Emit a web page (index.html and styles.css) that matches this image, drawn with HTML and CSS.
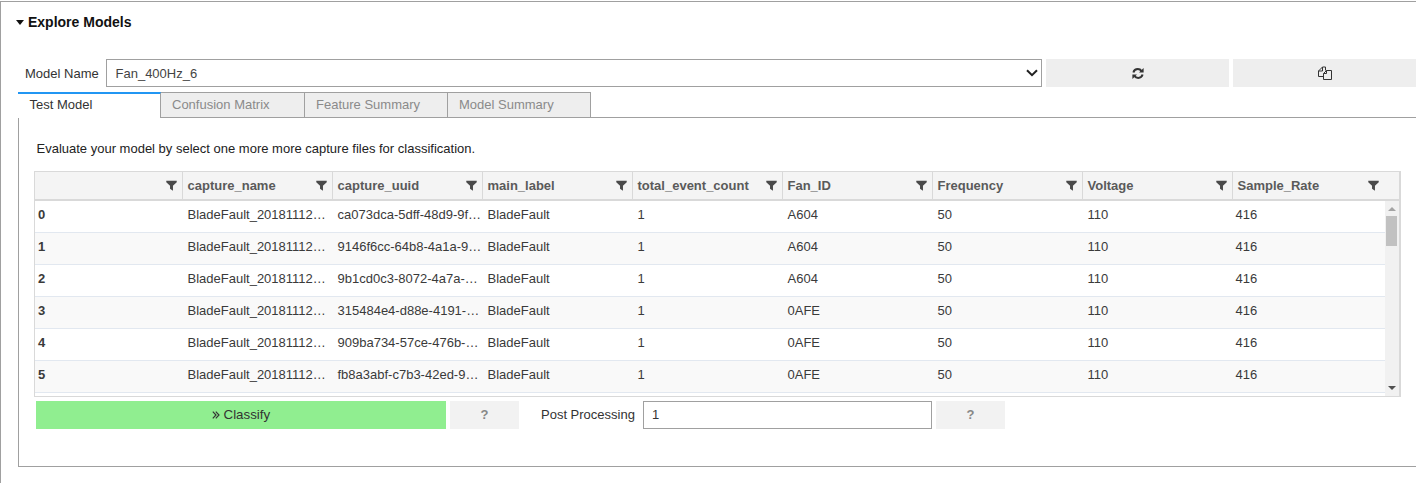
FILE: index.html
```html
<!DOCTYPE html>
<html lang="en">
<head>
    <meta charset="UTF-8" />
    <title>Explore Models</title>
    <link rel="stylesheet" href="styles.css">
</head>
<body>
    <svg width="0" height="0" class="defs">
        <symbol id="filter" viewBox="0 0 12 12">
            <path d="M0.3 0.8h11.4v1.6L7.6 6.4V11.6L4.4 9.6V6.4L0.3 2.4z" fill="#4a4a4a"/>
        </symbol>
    </svg>
    <section class="panel">
        <h2 class="panel-title"><span class="caret"></span>Explore Models</h2>

        <div class="model-row">
            <label class="model-label" for="model">Model Name</label>
            <div class="select-wrap">
                <select id="model" class="model-select">
                    <option>Fan_400Hz_6</option>
                </select>
                <svg class="chevron" width="12" height="8" viewBox="0 0 12 8" fill="none" stroke="#222" stroke-width="2">
                    <path d="M1 1.2L6 6.2L11 1.2"/>
                </svg>
            </div>
            <button class="icon-btn" type="button" aria-label="Refresh">
                <svg width="12" height="13" viewBox="0 0 12 13" fill="none" stroke="#333" stroke-width="2">
                    <path d="M1.4 5.4C2 3.2 3.8 2.1 5.8 2.1c1.5 0 2.9.7 3.8 2"/>
                    <path d="M10.6 7.6c-.6 2.2-2.4 3.3-4.4 3.3-1.5 0-2.9-.7-3.8-2"/>
                    <path d="M11.6 .9v4.6H7z" fill="#333" stroke="none"/>
                    <path d="M.4 12.1V7.5H5z" fill="#333" stroke="none"/>
                </svg>
            </button>
            <button class="icon-btn" type="button" aria-label="Copy">
                <svg width="14" height="14" viewBox="0 0 14 14" fill="none" stroke="#333" stroke-width="1">
                    <path d="M5.5 10.5H.5V5L4.5 1H7.5V4.5"/>
                    <path d="M4.5 1V5H.5"/>
                    <path d="M5.5 7.5L8.5 4.5H13.5V13.5H5.5z" fill="#eee"/>
                    <path d="M8.5 4.5V7.5H5.5"/>
                </svg>
            </button>
        </div>

        <div class="tabs">
            <div class="tab tab-active">Test Model</div>
            <div class="tab tab-wide">Confusion Matrix</div>
            <div class="tab">Feature Summary</div>
            <div class="tab">Model Summary</div>
        </div>

        <div class="tab-body">
            <p class="intro">Evaluate your model by select one more more capture files for classification.</p>

            <div class="grid">
                <div class="grid-head">
                    <div class="hcell"><span></span><svg class="funnel"><use href="#filter"/></svg></div>
                    <div class="hcell"><span>capture_name</span><svg class="funnel"><use href="#filter"/></svg></div>
                    <div class="hcell"><span>capture_uuid</span><svg class="funnel"><use href="#filter"/></svg></div>
                    <div class="hcell"><span>main_label</span><svg class="funnel"><use href="#filter"/></svg></div>
                    <div class="hcell"><span>total_event_count</span><svg class="funnel"><use href="#filter"/></svg></div>
                    <div class="hcell"><span>Fan_ID</span><svg class="funnel"><use href="#filter"/></svg></div>
                    <div class="hcell"><span>Frequency</span><svg class="funnel"><use href="#filter"/></svg></div>
                    <div class="hcell"><span>Voltage</span><svg class="funnel"><use href="#filter"/></svg></div>
                    <div class="hcell hcell-last"><span>Sample_Rate</span><svg class="funnel"><use href="#filter"/></svg></div>
                </div>
                <div class="grid-body">
                    <div class="row">
                        <div class="cell cell-index">0</div>
                        <div class="cell">BladeFault_20181112…</div>
                        <div class="cell">ca073dca-5dff-48d9-9f…</div>
                        <div class="cell">BladeFault</div>
                        <div class="cell">1</div>
                        <div class="cell">A604</div>
                        <div class="cell">50</div>
                        <div class="cell">110</div>
                        <div class="cell cell-last">416</div>
                    </div>
                    <div class="row">
                        <div class="cell cell-index">1</div>
                        <div class="cell">BladeFault_20181112…</div>
                        <div class="cell">9146f6cc-64b8-4a1a-9…</div>
                        <div class="cell">BladeFault</div>
                        <div class="cell">1</div>
                        <div class="cell">A604</div>
                        <div class="cell">50</div>
                        <div class="cell">110</div>
                        <div class="cell cell-last">416</div>
                    </div>
                    <div class="row">
                        <div class="cell cell-index">2</div>
                        <div class="cell">BladeFault_20181112…</div>
                        <div class="cell">9b1cd0c3-8072-4a7a-…</div>
                        <div class="cell">BladeFault</div>
                        <div class="cell">1</div>
                        <div class="cell">A604</div>
                        <div class="cell">50</div>
                        <div class="cell">110</div>
                        <div class="cell cell-last">416</div>
                    </div>
                    <div class="row">
                        <div class="cell cell-index">3</div>
                        <div class="cell">BladeFault_20181112…</div>
                        <div class="cell">315484e4-d88e-4191-…</div>
                        <div class="cell">BladeFault</div>
                        <div class="cell">1</div>
                        <div class="cell">0AFE</div>
                        <div class="cell">50</div>
                        <div class="cell">110</div>
                        <div class="cell cell-last">416</div>
                    </div>
                    <div class="row">
                        <div class="cell cell-index">4</div>
                        <div class="cell">BladeFault_20181112…</div>
                        <div class="cell">909ba734-57ce-476b-…</div>
                        <div class="cell">BladeFault</div>
                        <div class="cell">1</div>
                        <div class="cell">0AFE</div>
                        <div class="cell">50</div>
                        <div class="cell">110</div>
                        <div class="cell cell-last">416</div>
                    </div>
                    <div class="row">
                        <div class="cell cell-index">5</div>
                        <div class="cell">BladeFault_20181112…</div>
                        <div class="cell">fb8a3abf-c7b3-42ed-9…</div>
                        <div class="cell">BladeFault</div>
                        <div class="cell">1</div>
                        <div class="cell">0AFE</div>
                        <div class="cell">50</div>
                        <div class="cell">110</div>
                        <div class="cell cell-last">416</div>
                    </div>
                    <div class="scrollbar">
                        <span class="arrow arrow-up"></span>
                        <span class="thumb"></span>
                        <span class="arrow arrow-down"></span>
                    </div>
                </div>
            </div>

            <div class="actions">
                <button class="classify" type="button">
                    <svg width="8" height="8" viewBox="0 0 8 8" fill="none" stroke="#333" stroke-width="1.2">
                        <path d="M.8 .6L4 4L.8 7.4"/>
                        <path d="M3.8 .6L7 4L3.8 7.4"/>
                    </svg>
                    Classify
                </button>
                <button class="help" type="button">?</button>
                <label class="post-label" for="post">Post Processing</label>
                <input id="post" class="post-input" type="text" value="1" />
                <button class="help" type="button">?</button>
            </div>
        </div>
    </section>
</body>
</html>
```

FILE: styles.css
```css
* {
    box-sizing: border-box;
}
body {
    margin: 0;
    height: 483px;
    overflow: hidden;
    background: #fff;
    font-family: "Liberation Sans", Arial, sans-serif;
    font-size: 13px;
    color: #333;
}
button {
    font-family: inherit;
}
.defs {
    position: absolute;
}
.panel {
    height: 483px;
    margin-top: 1px;
    padding: 0 0 0 17px;
    border-top: 1px solid #a0a0a0;
    border-left: 1px solid #a0a0a0;
}
.panel-title {
    display: flex;
    align-items: center;
    height: 16px;
    margin: 12px 0 0 -2px;
    font-size: 14px;
    font-weight: bold;
    color: #111;
}
.caret {
    width: 0;
    height: 0;
    margin: 1px 4px 0 0;
    border-left: 4px solid transparent;
    border-right: 4px solid transparent;
    border-top: 5px solid #111;
}
.model-row {
    display: flex;
    align-items: center;
    height: 28px;
    margin-top: 29px;
    padding-left: 7px;
}
.model-label {
    width: 81px;
    color: #333;
}
.select-wrap {
    position: relative;
    width: 936px;
    height: 28px;
}
.model-select {
    width: 100%;
    height: 28px;
    padding-left: 8.5px;
    border: 1px solid #a0a0a0;
    border-radius: 0;
    background: #fff;
    font-family: inherit;
    font-size: 13px;
    color: #444;
    appearance: none;
}
.chevron {
    position: absolute;
    top: 10px;
    right: 4px;
}
.icon-btn {
    display: flex;
    align-items: center;
    justify-content: center;
    width: 183px;
    height: 28px;
    margin-left: 4px;
    border: none;
    background: #eee;
}
.tabs {
    display: flex;
    height: 26px;
    margin-top: 5px;
}
.tab {
    width: 143px;
    padding: 4px 0 0 11px;
    border-top: 1px solid #a0a0a0;
    border-right: 1px solid #a0a0a0;
    border-bottom: 1px solid #a0a0a0;
    background: #eee;
    color: #8a8a8a;
}
.tab-wide {
    width: 144px;
}
.tab-active {
    position: relative;
    z-index: 1;
    padding: 3px 0 0 11.5px;
    border-top: 2px solid #2196f3;
    border-bottom: none;
    background: #fff;
    color: #333;
}
.tab-body {
    height: 350px;
    margin-top: -1px;
    padding: 23px 0 0 15px;
    border-top: 1px solid #a0a0a0;
    border-left: 1px solid #a0a0a0;
    border-bottom: 1px solid #a0a0a0;
}
.intro {
    height: 15px;
    margin: 0 0 15px 2.5px;
    color: #222;
}
.grid {
    width: 1367px;
    height: 226px;
    border: 1px solid #d9d9d9;
    border-width: 1px 2px 1px 1px;
}
.grid-head {
    display: grid;
    grid-template-columns: 147.5px repeat(7, 150px) 1fr;
    height: 29px;
    background: #f4f4f4;
    border-bottom: 2px solid #d9d9d9;
}
.hcell {
    display: flex;
    align-items: center;
    justify-content: space-between;
    padding: 0 5px;
    border-right: 1px solid #d9d9d9;
    font-weight: bold;
    color: #5a5a5a;
}
.hcell-last {
    padding-right: 20px;
    border-right: none;
}
.funnel {
    width: 11px;
    height: 11px;
}
.grid-body {
    position: relative;
    height: 195px;
    padding-right: 14px;
    overflow: hidden;
}
.row {
    display: grid;
    grid-template-columns: 147.5px repeat(7, 150px) 1fr;
    height: 32px;
    padding-bottom: 4px;
    align-items: center;
    border-bottom: 1px solid #e2e8f0;
}
.row:nth-child(even) {
    background: #f9f9f9;
}
.cell {
    padding-left: 5px;
    white-space: nowrap;
    overflow: hidden;
    color: #3a3a3a;
}
.cell-index {
    padding-left: 3px;
    font-weight: bold;
}
.cell-last {
    padding-left: 3px;
}
.scrollbar {
    position: absolute;
    top: 0;
    right: 0;
    bottom: 0;
    width: 14px;
    background: #f1f1f1;
}
.arrow {
    position: absolute;
    left: 3px;
    width: 0;
    height: 0;
    border-left: 4px solid transparent;
    border-right: 4px solid transparent;
}
.arrow-up {
    top: 6px;
    border-bottom: 4px solid #a3a3a3;
}
.arrow-down {
    bottom: 6px;
    border-top: 4px solid #505050;
}
.thumb {
    position: absolute;
    top: 15px;
    left: 1px;
    width: 11px;
    height: 30px;
    background: #c1c1c1;
}
.actions {
    display: flex;
    align-items: center;
    height: 28px;
    margin-top: 4px;
    padding-left: 2px;
}
.classify {
    width: 410px;
    height: 28px;
    padding-bottom: 2px;
    border: none;
    background: #90ee90;
    font-size: 13.33px;
    color: #333;
}
.help {
    width: 69px;
    height: 28px;
    margin-left: 4px;
    padding-bottom: 2px;
    border: none;
    background: #f2f2f2;
    font-size: 13px;
    font-weight: bold;
    color: #888;
}
.post-label {
    width: 124px;
    padding: 0 0 2px 22px;
    color: #333;
}
.post-input {
    width: 289px;
    height: 28px;
    padding: 0 0 2px 8px;
    border: 1px solid #a0a0a0;
    border-radius: 0;
    font-family: inherit;
    font-size: 13px;
    color: #333;
}
```
